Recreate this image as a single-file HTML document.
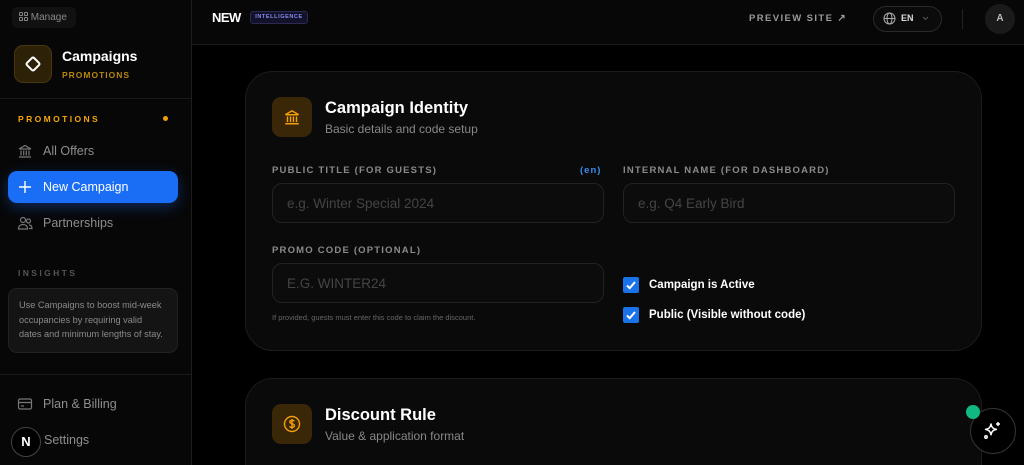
<!DOCTYPE html>
<html style="width:1024px;height:465px;overflow:hidden"><head><meta charset="utf-8"><style>
*{box-sizing:border-box;margin:0;padding:0}
body{width:1024px;height:465px;overflow:hidden;background:#000;font-family:"Liberation Sans",sans-serif;position:relative;color:#fff}
.abs{position:absolute}
.side{left:0;top:0;width:192px;height:465px;background:#070707;border-right:1px solid #1e1e1e}
.lbl{font-size:9.5px;font-weight:bold;letter-spacing:1.2px;color:#8a8a8a}
.inp{position:absolute;height:40px;border:1px solid #222;border-radius:10px;background:#0c0c0c;color:#444;font-size:13.5px;padding:12px 14px}
.nav{position:absolute;left:17px;font-size:12.5px;color:#8e8e8e;display:flex;align-items:center;gap:10px}
.cb{position:absolute;width:16px;height:16px;background:#1a73e8;border-radius:2px}
</style></head><body>
<div class="abs side">
 <div class="abs" style="left:12px;top:7px;width:64px;height:21px;background:#111;border-radius:5px;font-size:10px;color:#888;padding:5px 0 0 7px">
  <svg width="9" height="9" viewBox="0 0 9 9" style="vertical-align:-1px"><g fill="none" stroke="#888" stroke-width="1"><rect x=".5" y=".5" width="3" height="3" rx=".8"/><rect x="5.5" y=".5" width="3" height="3" rx=".8"/><rect x=".5" y="5.5" width="3" height="3" rx=".8"/><rect x="5.5" y="5.5" width="3" height="3" rx=".8"/></g></svg> Manage</div>
 <div class="abs" style="left:14px;top:45px;width:38px;height:38px;border-radius:9px;background:#2d2108;border:1px solid #4a3610"></div>
 <svg class="abs" style="left:24px;top:55px" width="18" height="18" viewBox="0 0 18 18"><rect x="4" y="4" width="10" height="10" rx="1.5" transform="rotate(45 9 9)" fill="none" stroke="#fff" stroke-width="2"/></svg>
 <div class="abs" style="left:62px;top:48px;font-size:14px;font-weight:bold">Campaigns</div>
 <div class="abs" style="left:62px;top:70px;font-size:8.5px;font-weight:bold;letter-spacing:1px;color:#b8860b">PROMOTIONS</div>
 <div class="abs" style="left:0;top:98px;width:191px;border-top:1px solid #1a1a1a"></div>
 <div class="abs" style="left:18px;top:114px;font-size:8.5px;font-weight:bold;letter-spacing:2.4px;color:#f5a60a">PROMOTIONS</div>
 <div class="abs" style="left:163px;top:116px;width:5px;height:5px;border-radius:50%;background:#f59e0b"></div>
 <div class="nav" style="top:143px"><svg width="16" height="16" viewBox="0 0 16 16" fill="none" stroke="#777" stroke-width="1.2"><path d="M2 6L8 2.5 14 6M2.5 6h11M4 7.5v5M6.7 7.5v5M9.3 7.5v5M12 7.5v5M2 14h12"/></svg>All Offers</div>
 <div class="abs" style="left:8px;top:171px;width:170px;height:32px;background:#1a6ef5;border-radius:9px;box-shadow:0 4px 14px rgba(26,110,245,.35)"></div>
 <div class="nav" style="top:179px;color:#fff"><svg width="16" height="16" viewBox="0 0 16 16" stroke="#fff" stroke-width="1.4"><path d="M8 2v12M2 8h12"/></svg>New Campaign</div>
 <div class="nav" style="top:215px"><svg width="16" height="16" viewBox="0 0 16 16" fill="none" stroke="#777" stroke-width="1.2"><circle cx="6" cy="5" r="2.5"/><path d="M1.5 14c0-3 2-4.5 4.5-4.5S10.5 11 10.5 14z"/><circle cx="11.5" cy="6" r="2"/><path d="M12 10c2 0 3 1.5 3 3.5h-3"/></svg>Partnerships</div>
 <div class="abs" style="left:18px;top:268px;font-size:8.5px;font-weight:bold;letter-spacing:2.4px;color:#555">INSIGHTS</div>
 <div class="abs" style="left:8px;top:288px;width:170px;height:65px;background:#141414;border:1px solid #222;border-radius:9px;padding:9px 10px;font-size:9.2px;line-height:14.6px;color:#8a8a8a">Use Campaigns to boost mid-week occupancies by requiring valid dates and minimum lengths of stay.</div>
 <div class="abs" style="left:0;top:374px;width:191px;border-top:1px solid #1a1a1a"></div>
 <div class="nav" style="top:396px"><svg width="16" height="16" viewBox="0 0 16 16" fill="none" stroke="#777" stroke-width="1.2"><rect x="1.5" y="3" width="13" height="10" rx="1.5"/><path d="M1.5 6.5h13M4 10h3"/></svg>Plan &amp; Billing</div>
 <div class="abs" style="left:44px;top:433px;font-size:12.5px;color:#8e8e8e">Settings</div>
 <div class="abs" style="left:11px;top:427px;width:30px;height:30px;border-radius:50%;background:#000;border:1px solid #444;font-size:13px;font-weight:bold;text-align:center;line-height:28px">N</div>
</div>
<div class="abs" style="left:192px;top:0;width:832px;height:45px;background:#070707;border-bottom:1px solid #1a1a1a"></div>
<div class="abs" style="left:212px;top:10px;font-size:13px;font-weight:bold;letter-spacing:-.5px">NEW</div>
<div class="abs" style="left:250px;top:11px;width:58px;height:13px;border:1px solid #2a2a55;background:#12122a;border-radius:3px;font-size:5.5px;font-weight:bold;color:#8b8bf0;letter-spacing:.6px;text-align:center;line-height:11px">INTELLIGENCE</div>
<div class="abs" style="left:749px;top:13px;font-size:9.5px;font-weight:bold;letter-spacing:1.4px;color:#999">PREVIEW SITE <span style="font-size:10px">↗</span></div>
<div class="abs" style="left:873px;top:6px;width:69px;height:26px;border:1px solid #2a2a2a;border-radius:13px;background:#0b0b0b"></div>
<svg class="abs" style="left:883px;top:12px" width="13" height="13" viewBox="0 0 13 13" fill="none" stroke="#aaa" stroke-width="1"><circle cx="6.5" cy="6.5" r="5.5"/><ellipse cx="6.5" cy="6.5" rx="2.5" ry="5.5"/><path d="M1 6.5h11"/></svg>
<div class="abs" style="left:901px;top:13px;font-size:9px;font-weight:bold;color:#ddd">EN</div>
<svg class="abs" style="left:922px;top:16px" width="7" height="5" viewBox="0 0 7 5"><path d="M1 1l2.5 2.5L6 1" fill="none" stroke="#555"/></svg>
<div class="abs" style="left:962px;top:9px;height:20px;border-left:1px solid #222"></div>
<div class="abs" style="left:985px;top:4px;width:30px;height:30px;border-radius:50%;background:#1a1a1a;font-size:10px;font-weight:bold;color:#bbb;text-align:center;line-height:30px">A</div>

<div class="abs" style="left:245px;top:71px;width:737px;height:280px;background:#0a0a0a;border:1px solid #1c1c1c;border-radius:28px"></div>
<div class="abs" style="left:272px;top:97px;width:40px;height:40px;border-radius:9px;background:#3a2708"></div>
<svg class="abs" style="left:283px;top:108px" width="18" height="18" viewBox="0 0 16 16" fill="none" stroke="#f59e0b" stroke-width="1.3"><path d="M2 6L8 2.5 14 6M2.5 6h11M4 7.5v5M6.7 7.5v5M9.3 7.5v5M12 7.5v5M2 14h12"/></svg>
<div class="abs" style="left:325px;top:99px;font-size:16.5px;font-weight:bold">Campaign Identity</div>
<div class="abs" style="left:325px;top:122px;font-size:12px;color:#888">Basic details and code setup</div>
<div class="abs lbl" style="left:272px;top:165px">PUBLIC TITLE (FOR GUESTS)</div>
<div class="abs" style="left:580px;top:165px;font-size:9.5px;font-weight:bold;letter-spacing:1px;color:#3b8ef0">(en)</div>
<div class="inp" style="left:272px;top:183px;width:332px">e.g. Winter Special 2024</div>
<div class="abs lbl" style="left:623px;top:165px">INTERNAL NAME (FOR DASHBOARD)</div>
<div class="inp" style="left:623px;top:183px;width:332px">e.g. Q4 Early Bird</div>
<div class="abs lbl" style="left:272px;top:245px">PROMO CODE (OPTIONAL)</div>
<div class="inp" style="left:272px;top:263px;width:332px">E.G. WINTER24</div>
<div class="abs" style="left:272px;top:313px;font-size:7.5px;color:#666">If provided, guests must enter this code to claim the discount.</div>
<div class="cb" style="left:623px;top:277px"></div>
<svg class="abs" style="left:625px;top:279px" width="12" height="12" viewBox="0 0 12 12"><path d="M2 6.5l2.7 2.7L10 3" fill="none" stroke="#fff" stroke-width="2"/></svg>
<div class="abs" style="left:649px;top:279px;font-size:11.5px;font-weight:bold">Campaign is Active</div>
<div class="cb" style="left:623px;top:307px"></div>
<svg class="abs" style="left:625px;top:309px" width="12" height="12" viewBox="0 0 12 12"><path d="M2 6.5l2.7 2.7L10 3" fill="none" stroke="#fff" stroke-width="2"/></svg>
<div class="abs" style="left:649px;top:309px;font-size:11.5px;font-weight:bold">Public (Visible without code)</div>

<div class="abs" style="left:245px;top:378px;width:737px;height:87px;background:#0a0a0a;border:1px solid #1c1c1c;border-bottom:none;border-radius:28px 28px 0 0"></div>
<div class="abs" style="left:272px;top:404px;width:40px;height:40px;border-radius:9px;background:#3a2708"></div>
<svg class="abs" style="left:283px;top:415px" width="18" height="18" viewBox="0 0 18 18" fill="none" stroke="#f59e0b" stroke-width="1.4"><circle cx="9" cy="9" r="7.5"/><path d="M11.3 6.3c-.4-.7-1.2-1-2.3-1-1.3 0-2.2.6-2.2 1.6 0 2.4 4.6 1.2 4.6 3.8 0 1-1 1.7-2.4 1.7-1.1 0-2-.4-2.4-1.1M9 4v10"/></svg>
<div class="abs" style="left:325px;top:406px;font-size:16.5px;font-weight:bold">Discount Rule</div>
<div class="abs" style="left:325px;top:429px;font-size:12px;color:#888">Value &amp; application format</div>

<div class="abs" style="left:970px;top:408px;width:46px;height:46px;border-radius:50%;background:#000;border:1px solid #333"></div>
<svg class="abs" style="left:982px;top:420px" width="22" height="22" viewBox="0 0 22 22" fill="none" stroke="#fff" stroke-width="1.5" stroke-linejoin="round"><path d="M9 4c.6 3.4 2 4.8 5.4 5.4C11 10 9.6 11.4 9 14.8 8.4 11.4 7 10 3.6 9.4 7 8.8 8.4 7.4 9 4z"/><path d="M16 2v4M14 4h4"/><circle cx="4" cy="17" r="1.2"/></svg>
<div class="abs" style="left:966px;top:405px;width:14px;height:14px;border-radius:50%;background:#10b981"></div>
</body></html>
